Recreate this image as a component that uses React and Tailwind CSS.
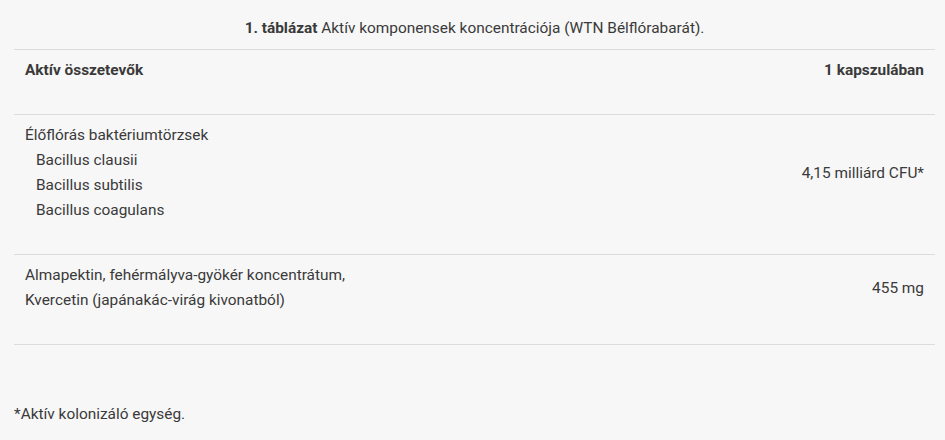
import React from 'react';

const rows = [
  {
    name: ['Élőflórás baktériumtörzsek'],
    subs: ['Bacillus clausii', 'Bacillus subtilis', 'Bacillus coagulans'],
    value: '4,15 milliárd CFU*',
  },
  {
    name: ['Almapektin, fehérmályva-gyökér koncentrátum,', 'Kvercetin (japánakác-virág kivonatból)'],
    subs: [],
    value: '455 mg',
  },
];

const App = () => {
  return (
    <div className="min-h-[440px] bg-[#f7f7f7] pl-[14px] pr-[10px] pt-[16px] text-[15.4px] leading-[25px] text-[#3a3a3a] font-['Roboto',sans-serif]">
      <p className="text-center">
        <span className="font-bold">1. táblázat</span> Aktív komponensek koncentrációja (WTN Bélflórabarát).
      </p>
      <table className="mt-[8px] w-full border-collapse">
        <thead>
          <tr className="border-y border-[#dcdcdc]">
            <th className="pl-[11px] pr-[10px] pt-[8px] pb-[31px] text-left align-middle font-bold">Aktív összetevők</th>
            <th className="pl-[10px] pr-[11px] pt-[8px] pb-[31px] text-right align-middle font-bold">1 kapszulában</th>
          </tr>
        </thead>
        <tbody>
          {rows.map((row, i) => (
            <tr key={i} className="border-b border-[#dcdcdc]">
              <td className="pl-[11px] pr-[10px] pt-[8px] pb-[31px] align-top">
                {row.name.map((n) => (
                  <div key={n}>{n}</div>
                ))}
                {row.subs.map((s) => (
                  <div key={s} className="pl-[11px]">{s}</div>
                ))}
              </td>
              <td className="pl-[10px] pr-[11px] pt-[8px] pb-[31px] text-right align-middle">
                {row.value}
              </td>
            </tr>
          ))}
        </tbody>
      </table>
      <p className="mt-[57px]">*Aktív kolonizáló egység.</p>
    </div>
  );
};

export default App;
